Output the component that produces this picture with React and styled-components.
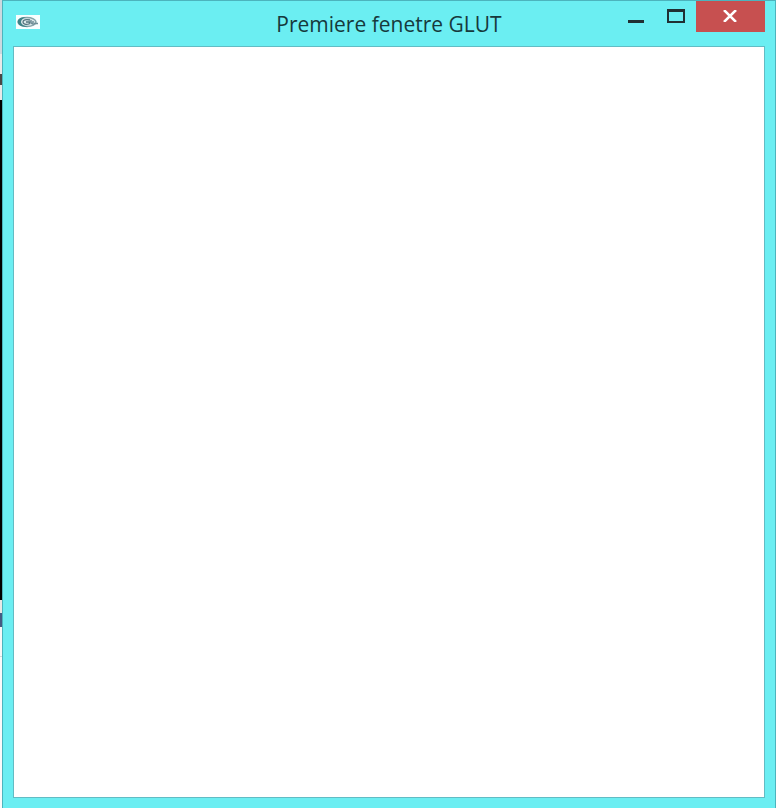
import React from "react";
import styled, { createGlobalStyle } from "styled-components";

const GlobalStyle = createGlobalStyle`
  *, *::before, *::after { box-sizing: border-box; }
  body { margin: 0; background: #fafafa; overflow: hidden; }
`;

const Desktop = styled.div`
  display: flex;
  height: 100vh;
`;

const BackgroundEdge = styled.div`
  flex: 0 0 2px;
  display: flex;
  flex-direction: column;
`;

const EdgeBand = styled.div`
  flex: ${(p) => (p.$height ? `0 0 ${p.$height}px` : "1")};
  background: ${(p) => p.$color};
`;

const Window = styled.main`
  flex: 1;
  min-width: 0;
  display: flex;
  flex-direction: column;
  padding: 0 10px 10px;
  background: #6beef2;
  border: 1px solid #4cb4bd;
  border-bottom: 0;
`;

const TitleBar = styled.header`
  flex: 0 0 45px;
  display: grid;
  grid-template-columns: 1fr auto 1fr;
`;

const AppIcon = styled.svg`
  width: 24px;
  height: 14px;
  margin: 14px 0 0 3px;
`;

const Title = styled.h1`
  margin: 0;
  padding-top: 8px;
  font: 400 21px/30px "Open Sans", "Noto Sans", sans-serif;
  color: #16393c;
  white-space: nowrap;
`;

const Controls = styled.div`
  display: flex;
  justify-content: flex-end;
  align-items: flex-start;
`;

const ControlButton = styled.button`
  width: ${(p) => (p.$close ? 69 : 40)}px;
  height: 31px;
  padding: ${(p) => (p.$close ? "0 2px 2px 0" : "0 0 2px")};
  border: 0;
  display: flex;
  align-items: center;
  justify-content: center;
  color: ${(p) => (p.$close ? "#ffffff" : "#203033")};
  background: ${(p) => (p.$close ? "#c75050" : "transparent")};
`;

const Glyph = styled.svg`
  display: block;
  fill: none;
  stroke: currentColor;
`;

const Canvas = styled.section`
  flex: 1;
  background: #ffffff;
  border: 1px solid #62bcc4;
`;

const edgeBands = [
  { height: 54, color: "#cbd9df" },
  { height: 20, color: "#e9e9e9" },
  { height: 11, color: "#4a4644" },
  { height: 15, color: "#e9e9e9" },
  { height: 500, color: "#000000" },
  { height: 13, color: "#e8e8e6" },
  { height: 14, color: "#455a82" },
  { height: 29, color: "#f8f8f8" },
  { height: 1, color: "#d4d8d8" },
  { color: "#fafafa" },
];

function GlutIcon() {
  return (
    <AppIcon viewBox="0 0 24 14" aria-hidden="true">
      <rect width="24" height="14" fill="#f8ffff" />
      <ellipse cx="11" cy="7" rx="9" ry="4.5" fill="#dce8ea" stroke="#86a5aa" strokeWidth="1.5" />
      <path d="M10 2C3 2 1 5 2 8c1 3 5 4 10 4-4-1-7-3-7-5s2-4 5-5Z" fill="#3d8287" />
      <path d="M14 5C10 4 7 5 7 7s3 3 6 2l1-2h-4" fill="none" stroke="#56767f" strokeWidth="1.3" />
      <path d="M15 5v3l2 1V6M18 8.5h4" fill="none" stroke="#708f98" strokeWidth="1.5" />
    </AppIcon>
  );
}

export default function App() {
  return (
    <>
      <GlobalStyle />
      <Desktop>
        <BackgroundEdge aria-hidden="true">
          {edgeBands.map((band, i) => (
            <EdgeBand key={i} $height={band.height} $color={band.color} />
          ))}
        </BackgroundEdge>
        <Window>
          <TitleBar>
            <GlutIcon />
            <Title>Premiere fenetre GLUT</Title>
            <Controls>
              <ControlButton type="button" aria-label="Minimize">
                <Glyph width="16" height="14" viewBox="0 0 16 14">
                  <path d="M0 12.5h16" strokeWidth="3" />
                </Glyph>
              </ControlButton>
              <ControlButton type="button" aria-label="Maximize">
                <Glyph width="18" height="14" viewBox="0 0 18 14">
                  <path d="M0 1.5h18" strokeWidth="3" />
                  <path d="M0 13h18M1 0v14M17 0v14" strokeWidth="2" />
                </Glyph>
              </ControlButton>
              <ControlButton type="button" aria-label="Close" $close>
                <Glyph width="14" height="12" viewBox="0 0 14 12">
                  <path d="M1 0l12 12M13 0L1 12" strokeWidth="2.5" />
                </Glyph>
              </ControlButton>
            </Controls>
          </TitleBar>
          <Canvas aria-label="Drawing area" />
        </Window>
      </Desktop>
    </>
  );
}
